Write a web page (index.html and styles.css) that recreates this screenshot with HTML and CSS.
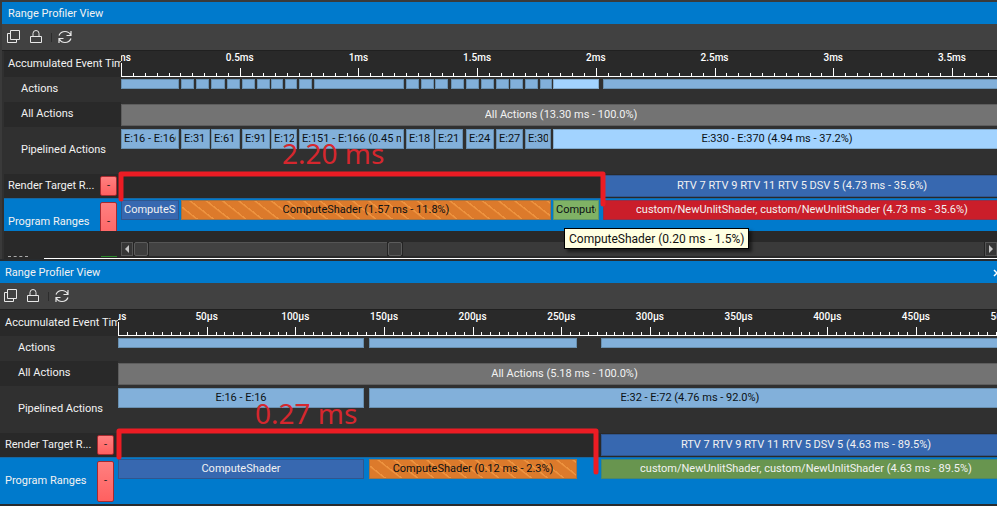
FILE: index.html
```html
<!DOCTYPE html>
<html lang="en">
<head>
<meta charset="utf-8">
<title>Range Profiler View</title>
<link rel="stylesheet" href="styles.css">
</head>
<body>
<svg class="defs" aria-hidden="true">
  <symbol id="i-copy" viewBox="0 0 14 14"><path d="M3.5 .5h9v9h-9zM3.5 3.500h-3v9h9v-3" fill="none" stroke="currentColor"/></symbol>
  <symbol id="i-lock" viewBox="0 0 14 14"><path d="M1.500 6.500h11v6h-11zM4 6.500V3.500a3 3 0 0 1 6 0v3" fill="none" stroke="currentColor"/></symbol>
  <symbol id="i-sync" viewBox="0 0 14 14"><path d="M1 5.500C2 3 4 1.500 7 1.500c2.500 0 4.500 1.200 5.500 3.200M13 1v4.500H8.500M13 8.500c-1 2.500-3 4-6 4-2.500 0-4.500-1.200-5.500-3.200M1 13V8.500h4.500" fill="none" stroke="currentColor" stroke-width="1.200"/></symbol>
</svg>

<section class="view view-a">
  <header class="title">Range Profiler View</header>
  <div class="tools">
    <button aria-label="Copy"><svg><use href="#i-copy"/></svg></button>
    <button aria-label="Lock"><svg><use href="#i-lock"/></svg></button>
    <span class="sep"></span>
    <button aria-label="Refresh"><svg><use href="#i-sync"/></svg></button>
  </div>
  <div class="table">
    <div class="row ruler-row"><div class="name">Accumulated Event Time</div><div class="lane"><div class="ruler" data-ruler="a"></div></div></div>
    <div class="row alt short"><div class="name sub">Actions</div><div class="lane"><div class="bars" data-bars="a-actions"></div></div></div>
    <div class="row all"><div class="name sub">All Actions</div><div class="lane"><div class="bars" data-bars="a-all"></div></div></div>
    <div class="row alt pipe"><div class="name sub">Pipelined Actions</div><div class="lane"><div class="bars" data-bars="a-pipe"></div></div></div>
    <div class="row target"><div class="name">Render Target R...<button class="fold" aria-label="Collapse">-</button></div><div class="lane"><div class="bars" data-bars="a-target"></div></div></div>
    <div class="clip"><div class="row program"><div class="name">Program Ranges<button class="fold" aria-label="Collapse">-</button></div><div class="lane"><div class="bars" data-bars="a-program"></div></div></div></div>
    <div class="row foot"><div class="name"></div><div class="lane">
      <div class="scroll"><button class="arrow" aria-label="Scroll left"><svg viewBox="0 0 6 8"><path d="M5 0v8L1 4z"/></svg></button><span class="grip"></span><span class="span"></span><span class="grip"></span><span class="rest"></span><button class="arrow" aria-label="Scroll right"><svg viewBox="0 0 6 8"><path d="M1 0v8l4-4z"/></svg></button></div>
    </div></div>
    <div class="edge"><span class="edge-text"></span><span class="edge-chip"></span></div>
  </div>
  <svg class="bracket" width="488" height="38"><path d="M3 28V3H485V33"/></svg>
  <div class="note">2.20 ms</div>
  <div class="tip" role="tooltip">ComputeShader (0.20 ms - 1.5%)</div>
</section>

<section class="view view-b">
  <header class="title">Range Profiler View<button class="close" aria-label="Close"><svg viewBox="0 0 8 8"><path d="M1 1l6 6M7 1L1 7"/></svg></button></header>
  <div class="tools">
    <button aria-label="Copy"><svg><use href="#i-copy"/></svg></button>
    <button aria-label="Lock"><svg><use href="#i-lock"/></svg></button>
    <span class="sep"></span>
    <button aria-label="Refresh"><svg><use href="#i-sync"/></svg></button>
  </div>
  <div class="table">
    <div class="row ruler-row"><div class="name">Accumulated Event Time</div><div class="lane"><div class="ruler" data-ruler="b"></div></div></div>
    <div class="row alt short"><div class="name sub">Actions</div><div class="lane"><div class="bars" data-bars="b-actions"></div></div></div>
    <div class="row all"><div class="name sub">All Actions</div><div class="lane"><div class="bars" data-bars="b-all"></div></div></div>
    <div class="row alt pipe"><div class="name sub">Pipelined Actions</div><div class="lane"><div class="bars" data-bars="b-pipe"></div></div></div>
    <div class="row target"><div class="name">Render Target R...<button class="fold" aria-label="Collapse">-</button></div><div class="lane"><div class="bars" data-bars="b-target"></div></div></div>
    <div class="row program"><div class="name">Program Ranges<button class="fold" aria-label="Collapse">-</button></div><div class="lane"><div class="bars" data-bars="b-program"></div></div></div>
  </div>
  <svg class="bracket" width="484" height="48"><path d="M3 29V3H480V44"/></svg>
  <div class="note">0.27 ms</div>
</section>
<script src="timeline.js"></script>
</body>
</html>
```
FILE: styles.css
```css
* { box-sizing: border-box; }
body {
  margin: 0;
  background: #282b2e;
  color: #f2f2f2;
  font: 11px/14px Roboto, "Noto Sans", sans-serif;
  overflow: hidden;
}
button { border: 0; padding: 0; margin: 0; background: none; color: inherit; font: inherit; }
.defs { position: absolute; width: 0; height: 0; }

.view { position: relative; overflow: hidden; }
.view-a { padding: 2px 0 0 2px; background: #3a3a3a; --names: 119px; --over: -4px; }
.view-b { padding: 2px 0 3px; background: #282b2e; --names: 118px; --over: -14px; }

.title {
  display: flex;
  align-items: center;
  justify-content: space-between;
  height: 22px;
  padding-left: 6px;
  padding-top: 1px;
  background: #007acc;
}
.view-b .title { padding-left: 5px; }
.close { width: 8px; height: 8px; margin-right: -4px; }
.close svg { display: block; width: 8px; height: 8px; fill: none; stroke: #fff; stroke-width: 1.500; }

.tools {
  display: flex;
  align-items: center;
  gap: 8px;
  height: 27px;
  padding-left: 5px;
  background: #414141;
  border-bottom: 1px solid #202020;
}
.view-b .tools { padding-left: 4px; }
.tools button { width: 14px; height: 14px; color: #e8e8e8; }
.tools svg { display: block; width: 14px; height: 14px; }
.sep { width: 1px; height: 9px; margin-right: -2px; background: #2c2c2c; }

.table { background: #292929; }
.view-a .table { border-left: 2px solid #303030; }
.view-a .table { --names: 117px; }
.row { display: flex; height: 25px; background: #292929; }
.name {
  display: flex;
  align-items: center;
  justify-content: space-between;
  flex: none;
  width: var(--names);
  padding-left: 4px;
  padding-right: 4px;
  white-space: nowrap;
  overflow: hidden;
}
.view-b .name { padding-left: 5px; }
.name.sub { padding-left: 17px; padding-bottom: 1px; }
.view-b .name.sub { padding-left: 18px; }
.lane { flex: 1; min-width: 0; overflow: hidden; background: #303030; }
.ruler-row { height: 26px; }
.ruler-row .name { padding-right: 0; }
.ruler-row .lane { background: #292929; }
.alt { background: #303030; }
.pipe { height: 47px; }
.target { height: 24px; }
.target .lane { background: #292929; }
.program { height: 47px; background: #007acc; border-top: 1px solid #1767a2; }
.program .lane { background: none; }
.clip { height: 33px; overflow: hidden; }

.ruler { width: 1100px; }
.labels, .ticks, .major { display: flex; }
.labels {
  height: 12px;
  font: 500 10px/14px Roboto, "Noto Sans", sans-serif;
  color: #fff;
  text-align: center;
}
.labels span, .major { flex: none; }
.ticks { align-items: flex-end; height: 14px; border-bottom: 1px solid #fff; }
.major { align-items: flex-end; }
.major i { flex: 1; height: 3px; border-left: 1px solid #fff; }
.major i:first-child { height: 8px; }
.major:first-child i:first-child { height: 13px; }

.bars { display: flex; height: 22px; margin: 2px var(--over) 0 0; }
.short .bars { height: 10px; }
.pipe .bars, .program .bars { height: 20px; }
.program .bars { margin-top: 1px; }
.target .bars { margin-top: 1px; }
.bar {
  flex: none;
  display: flex;
  justify-content: center;
  align-items: center;
  border: 1px solid #6990b0;
  padding: 0 2px 1px;
  background: #82b0da;
  color: #0b1014;
  white-space: nowrap;
}
.bar span { min-width: 0; overflow: hidden; }
.bar.fill { flex: 1 1 0; }
.bar.hot { background: #a2d3ff; border-color: #83abcd; }
.bar.grey { background: #737373; border-color: #5d5d5d; color: #f2f2f2; }
.bar.blue { background: #3768b0; border-color: #30568e; color: #f2f2f2; }
.bar.red { background: #ca1e2a; border-color: #93304a; color: #f2f2f2; }
.bar.lime { background: #7fb265; border-color: #5f9569; }
.bar.green { background: #68954f; border-color: #4c876b; color: #f2f2f2; }
.bar.orange {
  background: repeating-linear-gradient(38deg, #dc7a2b 0 8px, #ee933f 9px 10px);
  border-color: #a17345;
}

.fold {
  width: 17px;
  height: 20px;
  border: 1px solid #a52a30;
  border-radius: 2px;
  background: linear-gradient(#ff8080, #ff6060);
  color: #222;
}
.program .fold { height: 41px; }

.foot { height: 25px; }
.foot .lane { background: #292929; }
.scroll { display: flex; gap: 1px; height: 14px; margin-top: 11px; background: #242424; }
.arrow { flex: none; width: 12px; border: 1px solid #555; background: #363636; }
.arrow svg { display: block; width: 6px; height: 8px; margin: auto; fill: #c4c4c4; }
.grip { flex: none; width: 14px; border: 1px solid #5c5c5c; border-radius: 2px; background: #3d3d3d; }
.span { flex: none; width: 238px; background: #424242; border-top: 1px solid #555; }
.rest { flex: 1; background: #3a3a3a; }
.edge { display: flex; height: 3px; background: linear-gradient(#292929 2px, #fff 2px); }
.edge-text { width: 40px; background: linear-gradient(#292929, #292929); }
.edge-text::before { content: ""; display: block; width: 20px; margin-left: 4px; border-top: 1px dashed #aaa; }
.edge-chip { width: 16px; height: 1px; margin-left: 57px; background: #2d8a2d; }

.bracket { position: absolute; fill: none; stroke: #ec1c24; stroke-width: 5; stroke-linejoin: round; stroke-linecap: round; }
.view-a .bracket { left: 118px; top: 171px; }
.view-b .bracket { left: 116px; top: 169px; }
.note { position: absolute; color: #d5272e; font: 28px/32px "Noto Sans", "Open Sans", sans-serif; white-space: nowrap; }
.view-a .note { left: 282px; top: 137px; }
.view-b .note { left: 255px; top: 138px; }
.tip {
  position: absolute;
  left: 564px;
  top: 228px;
  height: 21px;
  padding: 0 4px;
  border: 1px solid #000;
  background: #ffffe1;
  box-shadow: 3px 3px 3px rgba(0, 0, 0, .5);
  color: #111;
  font: 12px/20px Roboto, "Noto Sans", sans-serif;
  white-space: nowrap;
}
```
FILE: timeline.js
```js
// Each bar: [start, end, label, style]; an end of null runs on to the lane's edge.
const lanes = {
  "a-actions": [[0,58],[60,73],[75,88],[90,104],[106,119],[121,134],[136,149],[150,162],[164,176],[178,191],[193,283],[285,298],[300,313],[314,327],[330,343],[345,358],[360,373],[375,388],[389,402],[404,417],[419,431],[432,478,"","hot"],[482,null]],
  "a-all": [[0,null,"All Actions (13.30 ms - 100.0%)","grey"]],
  "a-pipe": [[0,58,"E:16 - E:166"],[60,89,"E:31 - E:46"],[90,119,"E:61 - E:76"],[121,149,"E:91 - E:106"],[150,176,"E:121 - E:136"],[178,283,"E:151 - E:166 (0.45 ms - 3.4%)"],[285,313,"E:181 - E:196"],[314,342,"E:211 - E:226"],[345,373,"E:241 - E:256"],[375,402,"E:271 - E:286"],[404,430,"E:301 - E:316"],[432,null,"E:330 - E:370 (4.94 ms - 37.2%)","hot"]],
  "a-target": [[482,null,"RTV 7 RTV 9 RTV 11 RTV 5 DSV 5 (4.73 ms - 35.6%)","blue"]],
  "a-program": [[0,58,"ComputeShader","blue"],[60,430,"ComputeShader (1.57 ms - 11.8%)","orange"],[432,478,"ComputeShader","lime"],[482,null,"custom/NewUnlitShader, custom/NewUnlitShader (4.73 ms - 35.6%)","red"]],
  "b-actions": [[0,246],[251,459],[483,null]],
  "b-all": [[0,null,"All Actions (5.18 ms - 100.0%)","grey"]],
  "b-pipe": [[0,246,"E:16 - E:16"],[251,null,"E:32 - E:72 (4.76 ms - 92.0%)"]],
  "b-target": [[483,null,"RTV 7 RTV 9 RTV 11 RTV 5 DSV 5 (4.63 ms - 89.5%)","blue"]],
  "b-program": [[0,246,"ComputeShader","blue"],[251,459,"ComputeShader (0.12 ms - 2.3%)","orange"],[483,null,"custom/NewUnlitShader, custom/NewUnlitShader (4.63 ms - 89.5%)","green"]]
};

document.querySelectorAll("[data-bars]").forEach(lane => {
  let at = 0;
  for (const [start, end, label, style] of lanes[lane.dataset.bars]) {
    const bar = document.createElement("div");
    bar.className = "bar " + (style || "") + (end === null ? " fill" : "");
    bar.style.marginLeft = start - at + "px";
    if (end !== null) bar.style.width = end - start + "px";
    if (label) {
      const text = document.createElement("span");
      text.textContent = label;
      bar.append(text);
    }
    lane.append(bar);
    at = end;
  }
});

// Major step in pixels and the label of each major tick.
const rulers = {
  a: [831 / 7, ["0ms", "0.5ms", "1ms", "1.5ms", "2ms", "2.5ms", "3ms", "3.5ms"]],
  b: [798 / 9, ["0µs", "50µs", "100µs", "150µs", "200µs", "250µs", "300µs", "350µs", "400µs", "450µs", "500µs"]]
};

document.querySelectorAll("[data-ruler]").forEach(ruler => {
  const [step, names] = rulers[ruler.dataset.ruler];
  const labels = document.createElement("div");
  const ticks = document.createElement("div");
  labels.className = "labels";
  ticks.className = "ticks";
  labels.style.marginLeft = -step / 2 + "px";
  for (const name of names) {
    const label = document.createElement("span");
    label.textContent = name;
    label.style.width = step + "px";
    labels.append(label);
    const major = document.createElement("div");
    major.className = "major";
    major.style.width = step + "px";
    major.innerHTML = "<i></i>".repeat(10);
    ticks.append(major);
  }
  ruler.append(labels, ticks);
});
```
